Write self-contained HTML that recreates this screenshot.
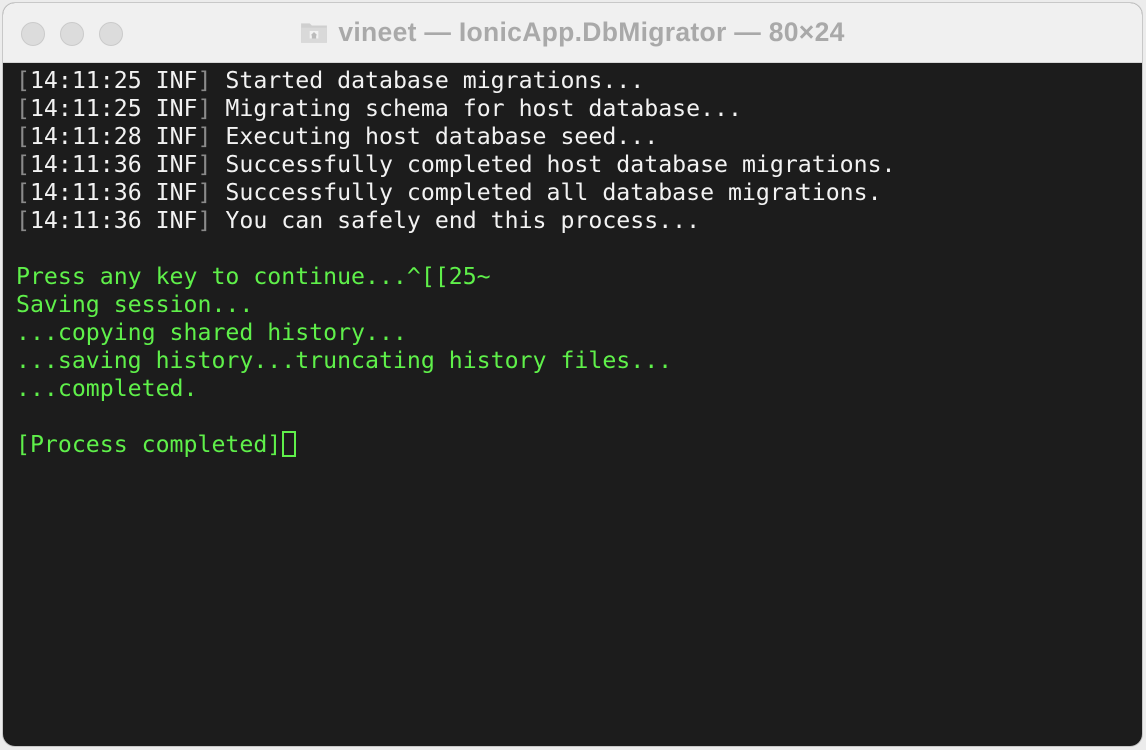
<!DOCTYPE html>
<html><head><style>
html,body{margin:0;padding:0;width:1146px;height:750px;background:#ececec;overflow:hidden}
.win{position:absolute;left:3px;top:3px;width:1139px;height:743px;border-radius:12px;overflow:hidden;background:#1c1c1c;box-shadow:0 0 0 1px #c8c8c8}
.title{position:absolute;left:0;top:0;right:0;height:59px;background:#f0f0f0;border-bottom:1px solid #d6d6d6}
.dot{position:absolute;top:19px;width:24px;height:24px;border-radius:50%;background:#dcdcdc;border:1px solid #cacaca;box-sizing:border-box}
.ttl{position:absolute;left:0;right:0;top:14px;text-align:center;font:bold 26.5px "Liberation Sans",sans-serif;color:#a9a9a9;letter-spacing:0.3px}
.fold{display:inline-block;width:28px;height:24px;vertical-align:-3px;margin-right:10px}
pre{position:absolute;left:13px;top:64px;margin:0;font:23.2px/28px "DejaVu Sans Mono","Liberation Mono",monospace;color:#f2f2f2;white-space:pre}
.b{color:#8a8a8a}
.g{color:#5ff04a}
.cur{display:inline-block;width:10px;height:22px;border:2px solid #5ff04a;vertical-align:-5px;margin-left:1px}
</style></head><body>
<div class="win">
<div class="title">
<div class="dot" style="left:18px"></div>
<div class="dot" style="left:57px"></div>
<div class="dot" style="left:96px"></div>
<div class="ttl"><svg class="fold" viewBox="0 0 26 22"><path d="M1 3h8l2 2h14v16H1z" fill="#cfcfcf"/><rect x="1" y="7" width="24" height="14" fill="#d9d9d9"/><rect x="9" y="10" width="8" height="7" fill="#f2f2f2"/><path d="M13 11l-3 3h1v3h4v-3h1z" fill="#bbb"/></svg>vineet — IonicApp.DbMigrator — 80×24</div>
</div>
<pre><span class="b">[</span>14:11:25 INF<span class="b">]</span> Started database migrations...
<span class="b">[</span>14:11:25 INF<span class="b">]</span> Migrating schema for host database...
<span class="b">[</span>14:11:28 INF<span class="b">]</span> Executing host database seed...
<span class="b">[</span>14:11:36 INF<span class="b">]</span> Successfully completed host database migrations.
<span class="b">[</span>14:11:36 INF<span class="b">]</span> Successfully completed all database migrations.
<span class="b">[</span>14:11:36 INF<span class="b">]</span> You can safely end this process...
<span class="g">
Press any key to continue...^[[25~
Saving session...
...copying shared history...
...saving history...truncating history files...
...completed.

[Process completed]<span class="cur"></span></span></pre>
</div>
</body></html>
